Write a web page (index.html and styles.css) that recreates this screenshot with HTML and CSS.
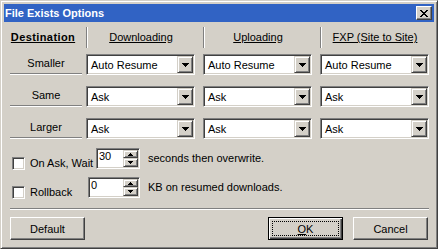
FILE: index.html
```html
<!DOCTYPE html>
<html lang="en">
<head>
    <meta charset="UTF-8">
    <title>File Exists Options</title>
    <link rel="stylesheet" href="styles.css">
</head>
<body>
    <div class="window">
        <div class="titlebar">
            <span class="title">File Exists Options</span>
            <span class="close-btn">
                <svg width="8" height="7" viewBox="0 0 8 7" shape-rendering="crispEdges"><path d="M0 0h2v1h-2zM6 0h2v1h-2zM1 1h2v1h-2zM5 1h2v1h-2zM2 2h4v1h-4zM3 3h2v1h-2zM2 4h4v1h-4zM1 5h2v1h-2zM5 5h2v1h-2zM0 6h2v1h-2zM6 6h2v1h-2z" fill="#000"/></svg>
            </span>
        </div>

        <div class="content">
            <div class="col-heads">
                <div class="col-head first"><span class="bold">Destination</span></div>
                <div class="col-head sep"><span>Downloading</span></div>
                <div class="col-head sep"><span>Uploading</span></div>
                <div class="col-head sep last"><span>FXP (Site to Site)</span></div>
            </div>

            <div class="rows">
                <div class="row-label">Smaller</div>
                <div class="combo"><span class="combo-text">Auto Resume</span><span class="combo-btn"><svg width="7" height="4" viewBox="0 0 7 4" shape-rendering="crispEdges"><path d="M0 0h7v1h-7zM1 1h5v1h-5zM2 2h3v1h-3zM3 3h1v1h-1z"/></svg></span></div>
                <div class="combo"><span class="combo-text">Auto Resume</span><span class="combo-btn"><svg width="7" height="4" viewBox="0 0 7 4" shape-rendering="crispEdges"><path d="M0 0h7v1h-7zM1 1h5v1h-5zM2 2h3v1h-3zM3 3h1v1h-1z"/></svg></span></div>
                <div class="combo"><span class="combo-text">Auto Resume</span><span class="combo-btn"><svg width="7" height="4" viewBox="0 0 7 4" shape-rendering="crispEdges"><path d="M0 0h7v1h-7zM1 1h5v1h-5zM2 2h3v1h-3zM3 3h1v1h-1z"/></svg></span></div>

                <div class="row-label">Same</div>
                <div class="combo"><span class="combo-text">Ask</span><span class="combo-btn"><svg width="7" height="4" viewBox="0 0 7 4" shape-rendering="crispEdges"><path d="M0 0h7v1h-7zM1 1h5v1h-5zM2 2h3v1h-3zM3 3h1v1h-1z"/></svg></span></div>
                <div class="combo"><span class="combo-text">Ask</span><span class="combo-btn"><svg width="7" height="4" viewBox="0 0 7 4" shape-rendering="crispEdges"><path d="M0 0h7v1h-7zM1 1h5v1h-5zM2 2h3v1h-3zM3 3h1v1h-1z"/></svg></span></div>
                <div class="combo"><span class="combo-text">Ask</span><span class="combo-btn"><svg width="7" height="4" viewBox="0 0 7 4" shape-rendering="crispEdges"><path d="M0 0h7v1h-7zM1 1h5v1h-5zM2 2h3v1h-3zM3 3h1v1h-1z"/></svg></span></div>

                <div class="row-label">Larger</div>
                <div class="combo"><span class="combo-text">Ask</span><span class="combo-btn"><svg width="7" height="4" viewBox="0 0 7 4" shape-rendering="crispEdges"><path d="M0 0h7v1h-7zM1 1h5v1h-5zM2 2h3v1h-3zM3 3h1v1h-1z"/></svg></span></div>
                <div class="combo"><span class="combo-text">Ask</span><span class="combo-btn"><svg width="7" height="4" viewBox="0 0 7 4" shape-rendering="crispEdges"><path d="M0 0h7v1h-7zM1 1h5v1h-5zM2 2h3v1h-3zM3 3h1v1h-1z"/></svg></span></div>
                <div class="combo"><span class="combo-text">Ask</span><span class="combo-btn"><svg width="7" height="4" viewBox="0 0 7 4" shape-rendering="crispEdges"><path d="M0 0h7v1h-7zM1 1h5v1h-5zM2 2h3v1h-3zM3 3h1v1h-1z"/></svg></span></div>
            </div>

            <div class="opt-row">
                <div class="opt-left">
                    <span class="checkbox"></span>
                    <span class="check-label">On Ask, Wait</span>
                    <div class="spinner wait">
                        <span class="spin-text">30</span>
                        <span class="spin-btns">
                            <span class="spin-btn up"><svg width="5" height="3" viewBox="0 0 5 3" shape-rendering="crispEdges"><path d="M2 0h1v1h-1zM1 1h3v1h-3zM0 2h5v1h-5z"/></svg></span>
                            <span class="spin-btn down"><svg width="5" height="3" viewBox="0 0 5 3" shape-rendering="crispEdges"><path d="M0 0h5v1h-5zM1 1h3v1h-3zM2 2h1v1h-1z"/></svg></span>
                        </span>
                    </div>
                </div>
                <span class="opt-text">seconds then overwrite.</span>
            </div>

            <div class="opt-row second">
                <div class="opt-left">
                    <span class="checkbox"></span>
                    <span class="check-label">Rollback</span>
                    <div class="spinner rollback">
                        <span class="spin-text">0</span>
                        <span class="spin-btns">
                            <span class="spin-btn up"><svg width="5" height="3" viewBox="0 0 5 3" shape-rendering="crispEdges"><path d="M2 0h1v1h-1zM1 1h3v1h-3zM0 2h5v1h-5z"/></svg></span>
                            <span class="spin-btn down"><svg width="5" height="3" viewBox="0 0 5 3" shape-rendering="crispEdges"><path d="M0 0h5v1h-5zM1 1h3v1h-3zM2 2h1v1h-1z"/></svg></span>
                        </span>
                    </div>
                </div>
                <span class="opt-text">KB on resumed downloads.</span>
            </div>

            <div class="separator"></div>

            <div class="button-row">
                <button class="btn">Default</button>
                <div class="button-group">
                    <button class="btn default-btn"><span class="focus"><u>O</u>K</span></button>
                    <button class="btn">Cancel</button>
                </div>
            </div>
        </div>
    </div>
</body>
</html>
```

FILE: styles.css
```css
body {
    margin: 0;
    background-color: #d4d0c8;
    font-family: "Liberation Sans", Arial, sans-serif;
    font-size: 11px;
    color: #000;
}
.window {
    box-sizing: border-box;
    width: 438px;
    height: 249px;
    padding: 3px;
    background-color: #d4d0c8;
    border: 1px solid;
    border-color: #d4d0c8 #404040 #404040 #d4d0c8;
    box-shadow: inset 1px 1px #fff, inset -1px -1px #808080;
}
.titlebar {
    display: flex;
    align-items: center;
    justify-content: space-between;
    height: 18px;
    padding: 0 2px 0 1px;
    background-color: #3163c4;
    color: #fff;
}
.title {
    font-weight: bold;
    font-size: 11px;
}
.close-btn {
    display: flex;
    align-items: center;
    justify-content: center;
    box-sizing: border-box;
    width: 16px;
    height: 14px;
    background-color: #d4d0c8;
    border: 1px solid;
    border-color: #fff #404040 #404040 #fff;
    box-shadow: inset -1px -1px #808080;
}
.content {
    padding: 5px 5px 0 6px;
}

/* column headings */
.col-heads {
    display: grid;
    grid-template-columns: 76px 117px 117px 109px;
    height: 21px;
    margin-bottom: 6px;
}
.col-head {
    display: flex;
    align-items: center;
    justify-content: center;
    padding-right: 8px;
}
.col-head span {
    text-decoration: underline;
    margin-top: -1px;
}
.col-head.first {
    padding-right: 10px;
}
.col-head.last {
    padding-right: 0;
}
.col-head.sep {
    border-left: 1px solid #808080;
    box-shadow: inset 1px 0 #fff;
}
.bold {
    font-weight: bold;
    letter-spacing: 0.4px;
}

/* destination rows */
.rows {
    display: grid;
    grid-template-columns: 76px 117px 117px 109px;
    grid-auto-rows: 21px;
    row-gap: 11px;
}
.row-label {
    width: 72px;
    height: 19px;
    line-height: 19px;
    text-align: center;
    border-bottom: 1px solid #808080;
    box-shadow: 0 1px #fff;
}
.combo {
    box-sizing: border-box;
    display: flex;
    align-items: center;
    width: 109px;
    height: 21px;
    background-color: #fff;
    border: 1px solid;
    border-color: #808080 #fff #fff #808080;
    box-shadow: inset 1px 1px #404040, inset -1px -1px #d4d0c8;
    padding: 1px;
}
.combo-text {
    flex: 1;
    padding-left: 3px;
}
.combo-btn,
.spin-btn {
    box-sizing: border-box;
    display: flex;
    align-items: center;
    justify-content: center;
    background-color: #d4d0c8;
    border: 1px solid;
    border-color: #d4d0c8 #404040 #404040 #d4d0c8;
    box-shadow: inset 1px 1px #fff, inset -1px -1px #808080;
}
.combo-btn {
    width: 16px;
    height: 17px;
}

/* checkbox + spinner rows */
.opt-row {
    display: flex;
    align-items: flex-start;
    padding-left: 2px;
    margin-top: 9px;
}
.opt-row.second {
    margin-top: 7px;
}
.opt-left {
    display: flex;
    align-items: flex-start;
    width: 128px;
}
.checkbox {
    box-sizing: border-box;
    width: 13px;
    height: 13px;
    margin-top: 9px;
    background-color: #fff;
    border: 1px solid;
    border-color: #808080 #fff #fff #808080;
    box-shadow: inset 1px 1px #404040, inset -1px -1px #d4d0c8;
}
.check-label {
    margin: 9px 0 0 5px;
    line-height: 13px;
}
.spinner {
    box-sizing: border-box;
    display: flex;
    height: 21px;
    margin-left: auto;
    background-color: #fff;
    border: 1px solid;
    border-color: #808080 #fff #fff #808080;
    box-shadow: inset 1px 1px #404040, inset -1px -1px #d4d0c8;
    padding: 1px;
}
.spinner.wait {
    width: 44px;
}
.spinner.rollback {
    width: 52px;
}
.spin-text {
    flex: 1;
    padding-left: 1px;
    line-height: 13px;
}
.spin-btns {
    display: flex;
    flex-direction: column;
    width: 15px;
}
.spin-btn.up {
    height: 8px;
}
.spin-btn.down {
    height: 9px;
}
.opt-text {
    margin-left: 8px;
    line-height: 20px;
}

.separator {
    height: 1px;
    margin: 9px 0 7px 0;
    border-bottom: 1px solid #fff;
    background-color: #808080;
}

/* dialog buttons */
.button-row {
    display: flex;
    justify-content: space-between;
    padding-right: 1px;
}
.button-group {
    display: flex;
    gap: 10px;
}
.btn {
    box-sizing: border-box;
    width: 75px;
    height: 23px;
    padding: 0;
    font-family: "Liberation Sans", Arial, sans-serif;
    font-size: 11px;
    color: #000;
    background-color: #d4d0c8;
    border: 1px solid;
    border-color: #fff #404040 #404040 #fff;
    box-shadow: inset -1px -1px #808080;
}
.default-btn {
    border: 1px solid #000;
    box-shadow: inset 1px 1px #fff, inset -1px -1px #404040, inset -2px -2px #808080;
    padding: 3px;
}
.focus {
    display: flex;
    align-items: center;
    justify-content: center;
    height: 100%;
    border: 1px dotted #000;
    box-sizing: border-box;
}
```
